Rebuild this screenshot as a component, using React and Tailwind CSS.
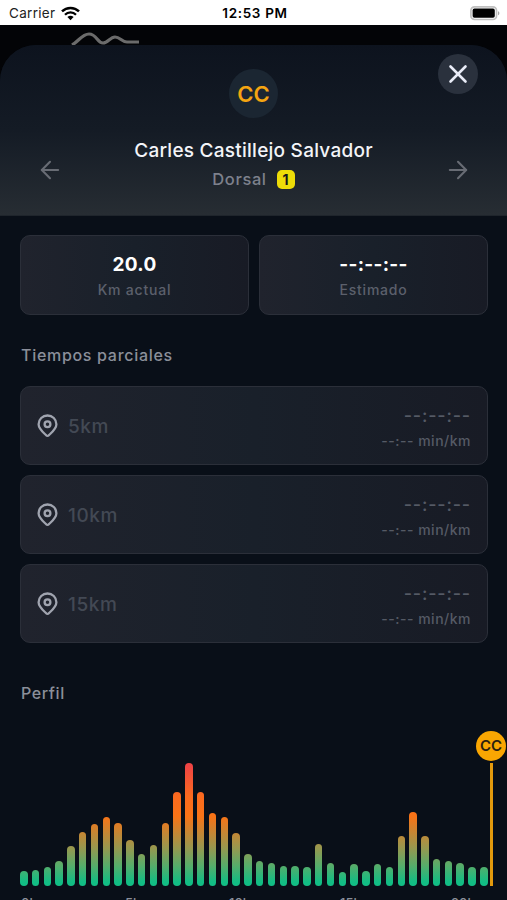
import { ArrowLeft, ArrowRight, X } from "lucide-react";

const splits = ["5km", "10km", "15km"];

const kmMarks = [
  { label: "0km", className: "left-[21px]" },
  { label: "5km", className: "left-[125px]" },
  { label: "10km", className: "left-[229px]" },
  { label: "15km", className: "left-[340px]" },
  { label: "20km", className: "left-[451px]" },
];

const profile = [
  15, 16, 19, 25, 40, 54, 61.5, 69, 63, 46, 32, 41, 63, 93.5, 123, 93.5, 72.5,
  69, 53, 32, 25, 22.5, 20, 20, 19, 42, 22.5, 14, 21.5, 15, 21.5, 19, 49.5, 74,
  49.5, 27, 25, 22.5, 19, 19,
];

function WifiIcon() {
  return (
    <svg width="19" height="15" viewBox="0 0 19 15" fill="none" stroke="#000">
      <path d="M1 5.4a12.2 12.2 0 0 1 17 0" strokeWidth="2.5" />
      <path d="M4 8.7a7.8 7.8 0 0 1 11 0" strokeWidth="2.3" />
      <path d="M9.5 14.2 6.4 11.1a4.5 4.5 0 0 1 6.2 0z" fill="#000" stroke="none" />
    </svg>
  );
}

function BatteryIcon() {
  return (
    <svg width="31" height="15" viewBox="0 0 31 15" fill="none">
      <rect x="0.9" y="0.9" width="25.6" height="12.6" rx="3.6" stroke="#c0c0c0" strokeWidth="1.7" />
      <rect x="2.6" y="2.6" width="22.2" height="9.2" rx="1.8" fill="#000" />
      <path d="M28 5.2c1.8.5 1.8 3.5 0 4z" fill="#a8a8a8" />
    </svg>
  );
}

function PinIcon() {
  return (
    <svg width="22" height="24" viewBox="0 0 22 24" fill="none" stroke="#a0a4af" strokeWidth="2.3">
      <path
        d="M11.500 21.800c-.6 0-1-.2-1.400-.6C6.500 17.800 2.600 14.600 2.600 10.200a8.900 8.700 0 0 1 17.800 0c0 4.400-3.900 7.600-7.500 11-.4.4-.8.6-1.400.6z"
        strokeLinejoin="round"
      />
      <circle cx="11.500" cy="10.200" r="2.900" />
    </svg>
  );
}

function StatusBar() {
  return (
    <div className="grid h-[25px] grid-cols-3 items-center bg-white pt-[2px] pr-[6px] pl-[9px] text-[13.500px] text-black">
      <div className="flex items-center gap-[6px]">
        <span className="tracking-[0.3px] text-[#222]">Carrier</span>
        <WifiIcon />
      </div>
      <span className="text-center font-semibold tracking-[0.65px] whitespace-nowrap">12:53 PM</span>
      <div className="flex justify-end">
        <BatteryIcon />
      </div>
    </div>
  );
}

function Stat({ value, label }) {
  return (
    <div className="flex h-20 flex-1 flex-col items-center rounded-[10px] border border-[#2b2f39] bg-linear-to-r from-[#20232d] via-[#19202a] to-[#181b25] pt-[17px]">
      <p className="text-[19px] leading-6 font-bold tracking-[0.3px] text-white">{value}</p>
      <p className="mt-[3px] text-[14px] leading-5 font-medium tracking-[0.8px] text-[#5c606c]">{label}</p>
    </div>
  );
}

function Split({ label }) {
  return (
    <div className="flex h-[79px] items-center justify-between rounded-[10px] border border-[#2b2f39] bg-linear-to-r from-[#20232d] via-[#19202a] to-[#181b25] pr-4 pl-[15px]">
      <div className="flex items-center gap-[10px]">
        <PinIcon />
        <span className="pt-[3px] text-[19px] font-medium tracking-[0.6px] text-[#434954]">{label}</span>
      </div>
      <div className="pt-[6px] text-right font-medium text-[#555a65]">
        <p className="text-[18px] leading-6 tracking-[0.8px]">--:--:--</p>
        <p className="mt-[1px] text-[14px] leading-6 tracking-[0.5px]">--:-- min/km</p>
      </div>
    </div>
  );
}

export default function App() {
  return (
    <div className="h-[900px] w-full overflow-hidden bg-[#030407] font-['Inter',sans-serif]">
      <StatusBar />
      <div className="h-5 pt-[7px] pl-[71px]">
        <svg width="70" height="13" viewBox="0 0 70 13" fill="none" stroke="#6b6b6b" strokeWidth="3.2">
          <path d="M1 13C7 10 11 2 18 2c8 0 8 9 14 9 5 0 7-6 12-6s7 5 12 5h12" />
        </svg>
      </div>

      <div className="h-[875px] rounded-t-[36px] bg-[#090f18]">
        <header className="relative flex h-[171px] flex-col items-center rounded-t-[36px] border-b border-[#1f252c] bg-linear-to-b from-[#0d131e] via-[#141b25] to-[#272d33] pt-6">
          <div className="flex size-[49px] items-center justify-center rounded-full bg-[#1b2632] pt-[1px] text-[22px] font-semibold text-[#f5a511]">
            CC
          </div>
          <h1 className="mt-[19px] text-[19px] leading-7 font-medium tracking-[0.25px] text-[#f3f4f8]">
            Carles Castillejo Salvador
          </h1>
          <div className="flex items-center gap-[10px]">
            <span className="text-[16.500px] leading-7 font-medium tracking-[0.6px] text-[#7d818c]">Dorsal</span>
            <span className="flex h-[19px] w-[18px] items-center justify-center rounded-[5px] bg-[#eddc08] text-[14px] font-bold text-[#14161a]">
              1
            </span>
          </div>
          <button className="absolute top-[9px] right-[29px] flex size-[40px] items-center justify-center rounded-full bg-[#2a313d]">
            <X size={30} strokeWidth={2.1} color="#e9ecf7" />
          </button>
          <ArrowLeft className="absolute top-[111px] left-[36px]" size={28} strokeWidth={1.8} color="#686c74" />
          <ArrowRight className="absolute top-[111px] right-[35px]" size={28} strokeWidth={1.8} color="#686c74" />
        </header>

        <main className="pt-[19px]">
          <div className="flex gap-[10px] pr-[19px] pl-5">
            <Stat value="20.0" label="Km actual" />
            <Stat value="--:--:--" label="Estimado" />
          </div>

          <h2 className="mt-7 px-[21px] text-[16px] leading-6 font-medium tracking-[0.7px] text-[#8b8f9a]">
            Tiempos parciales
          </h2>
          <div className="mt-[19px] flex flex-col gap-[10px] pr-[19px] pl-5">
            {splits.map((label) => (
              <Split key={label} label={label} />
            ))}
          </div>

          <h2 className="mt-[38px] px-[21px] text-[16px] leading-6 font-medium tracking-[0.6px] text-[#8b8f9a]">
            Perfil
          </h2>
          <div className="relative h-[180.5px]">
            <div className="flex h-full items-end justify-between pr-[19px] pl-5">
              {profile.map((height, i) => (
                <div
                  key={i}
                  className="w-[7.5px] rounded-full bg-[linear-gradient(to_top,#12bd84_4px,#55ad6b_20px,#97984f_38px,#f97316_70px,#fb6a1e_90px,#ef4444_120px)]"
                  style={{ height }}
                />
              ))}
            </div>
            <div className="absolute right-[1px] bottom-0 flex h-[155px] w-[30px] flex-col items-center gap-[2px]">
              <span className="flex size-[30px] shrink-0 items-center justify-center rounded-full bg-[#f9a602] pt-[1px] text-[15px] font-semibold text-[#2b2110]">
                CC
              </span>
              <span className="w-[3px] flex-1 bg-[#e39a0d]" />
            </div>
          </div>
          <div className="relative mt-[7px] h-5 text-[13px] leading-5 font-medium text-[#8b8f9a]">
            {kmMarks.map((mark) => (
              <span key={mark.label} className={`absolute top-0 ${mark.className}`}>
                {mark.label}
              </span>
            ))}
          </div>
        </main>
      </div>
    </div>
  );
}
